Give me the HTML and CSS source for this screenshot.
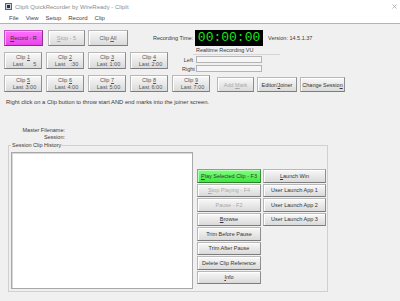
FILE: index.html
```html
<!DOCTYPE html>
<html lang="en">
<head>
    <meta charset="UTF-8">
    <meta name="viewport" content="width=device-width, initial-scale=1.0">
    <title>ClipIt QuickRecorder</title>
    <link rel="stylesheet" href="styles.css">
</head>
<body>
    <div class="titlebar">
        <svg class="app-icon" width="7" height="7" viewBox="0 0 7 7">
            <rect x="0" y="0" width="7" height="7" fill="#5a6470"/>
            <rect x="1" y="1" width="5" height="5" fill="#c9d3dd"/>
            <rect x="2" y="2" width="3" height="3" fill="#2d3640"/>
        </svg>
        <span class="title">ClipIt QuickRecorder by WireReady - ClipIt</span>
        <svg class="close" width="5" height="5" viewBox="0 0 5 5">
            <path d="M0.5 0.5 L4.5 4.5 M4.5 0.5 L0.5 4.5" stroke="#9a9a9a" stroke-width="0.7"/>
        </svg>
    </div>

    <div class="menubar">
        <span>File</span>
        <span>View</span>
        <span>Setup</span>
        <span>Record</span>
        <span>Clip</span>
    </div>

    <div class="main">
        <div class="row-top">
            <button class="btn btn-record"><u>R</u>ecord - R</button>
            <button class="btn btn-stop disabled"><u>S</u>top - 5</button>
            <button class="btn btn-all dim">Clip <u>A</u>ll</button>
            <span class="rec-label">Recording Time:</span>
            <div class="timer">00:00:00</div>
            <span class="version">Version: 14.5.1.37</span>
        </div>

        <div class="row-a">
            <div class="clips">
                <button class="btn clip"><span>Clip <u>1</u></span><span class="last">Last<b>5</b></span></button>
                <button class="btn clip"><span>Clip <u>2</u></span><span class="last">Last<b>:30</b></span></button>
                <button class="btn clip"><span>Clip <u>3</u></span><span class="last">Last<b>1:00</b></span></button>
                <button class="btn clip"><span>Clip <u>4</u></span><span class="last">Last<b>2:00</b></span></button>
            </div>
            <div class="vu">
                <div class="vu-title">Realtime Recording VU</div>
                <div class="vu-row"><span class="vu-label">Left</span><div class="vu-meter"></div></div>
                <div class="vu-row"><span class="vu-label">Right</span><div class="vu-meter"></div></div>
            </div>
        </div>

        <div class="row-b">
            <div class="clips">
                <button class="btn clip"><span>Clip <u>5</u></span><span class="last">Last<b>3:00</b></span></button>
                <button class="btn clip"><span>Clip <u>6</u></span><span class="last">Last<b>4:00</b></span></button>
                <button class="btn clip"><span>Clip <u>7</u></span><span class="last">Last<b>5:00</b></span></button>
                <button class="btn clip"><span>Clip <u>8</u></span><span class="last">Last<b>6:00</b></span></button>
                <button class="btn clip"><span>Clip <u>9</u></span><span class="last">Last<b>7:00</b></span></button>
            </div>
            <button class="btn action btn-mark disabled">Add <u>M</u>ark</button>
            <button class="btn action btn-editor">Editor/<u>J</u>oiner</button>
            <button class="btn action btn-session">Change Sessio<u>n</u></button>
        </div>

        <p class="hint">Right click on a Clip button to throw start AND end marks into the joiner screen.</p>

        <div class="info">
            <div>Master Filename:</div>
            <div>Session:</div>
        </div>

        <fieldset class="history">
            <legend>Session Clip History</legend>
            <div class="history-body">
                <div class="listbox"></div>
                <div class="history-buttons">
                    <button class="btn small btn-play"><u>P</u>lay Selected Clip - F3</button>
                    <button class="btn small disabled"><u>S</u>top Playing - F4</button>
                    <button class="btn small disabled">Pause - F2</button>
                    <button class="btn small"><u>B</u>rowse</button>
                    <button class="btn small">Trim Before Pause</button>
                    <button class="btn small">Trim After Pause</button>
                    <button class="btn small">Delete Clip Reference</button>
                    <button class="btn small"><u>I</u>nfo</button>
                    <button class="btn small"><u>L</u>aunch Win</button>
                    <button class="btn small">User Launch App 1</button>
                    <button class="btn small">User Launch App 2</button>
                    <button class="btn small">User Launch App 3</button>
                </div>
            </div>
        </fieldset>
    </div>
</body>
</html>
```

FILE: styles.css
```css
body {
    margin: 0;
    background-color: #f0f0f0;
    font-family: "Liberation Sans", Arial, sans-serif;
    font-size: 5.5px;
    color: #3a3a3a;
}

/* window chrome */

.titlebar {
    display: flex;
    align-items: center;
    height: 13px;
    padding: 0 3px 0 5px;
    background-color: #fff;
}

.app-icon {
    margin-right: 3px;
}

.title {
    flex: 1;
    font-size: 6px;
    color: #8c8c8c;
}

.menubar {
    display: flex;
    align-items: center;
    height: 10px;
    padding-left: 5.5px;
    background-color: #fff;
    border-bottom: 1px solid #b4b4b4;
    font-size: 6px;
    color: #444;
}

.menubar span {
    padding: 0 3.5px;
}

.main {
    padding: 0 4px;
}

/* buttons */

.btn {
    box-sizing: border-box;
    height: 16px;
    padding: 0;
    font: inherit;
    color: #333;
    background: linear-gradient(#f8f8f8, #dadada);
    border: 1px solid #b8b8b8;
    border-right-color: #8e8e8e;
    border-bottom-color: #7c7c7c;
    box-shadow: inset 1px 1px 0 #fff;
}

.btn u {
    text-decoration-thickness: 0.5px;
}

.btn.disabled {
    color: #a8a8a8;
}

.btn.dim {
    color: #5e5e5e;
}

.btn-record {
    width: 39px;
    background: linear-gradient(#ff70ff, #e846e8);
    border-color: #c050c0 #903090 #803080 #c050c0;
    box-shadow: inset 1px 1px 0 #ffa8ff;
}

.btn-stop {
    width: 37px;
    margin-left: 5px;
}

.btn-all {
    width: 40px;
    margin-left: 3px;
}

/* top row */

.row-top {
    display: flex;
    align-items: center;
    height: 16px;
    margin-top: 6px;
}

.rec-label {
    margin-left: 25px;
}

.timer {
    width: 68px;
    height: 16px;
    margin-left: 2px;
    background-color: #000;
    color: #1fe31f;
    font-family: "Liberation Mono", "DejaVu Sans Mono", monospace;
    font-size: 13px;
    line-height: 16px;
    text-align: center;
}

.version {
    margin-left: 5px;
}

/* clip rows */

.row-a {
    display: flex;
    align-items: flex-start;
    margin-top: 1px;
}

.row-b {
    display: flex;
    align-items: flex-end;
    margin-top: 3px;
}

.clips {
    display: flex;
    gap: 4px;
}

.row-a .clips {
    margin-top: 5px;
}

.clip {
    display: flex;
    flex-direction: column;
    align-items: center;
    justify-content: center;
    width: 38px;
    height: 17px;
    line-height: 7px;
    color: #555;
}

.clip .last {
    display: flex;
    gap: 2px;
    padding-left: 3px;
}

.clip .last b {
    width: 11px;
    font-weight: normal;
    text-align: right;
}

.vu {
    margin-left: 14px;
}

.vu-title {
    width: 84px;
    margin-left: 11px;
    padding-left: 3px;
    line-height: 7px;
    border-bottom: 1px solid #d6d6d6;
}

.vu-row {
    display: flex;
    align-items: center;
    margin-top: 1px;
}

.vu-row + .vu-row {
    margin-top: 2px;
}

.vu-label {
    width: 11px;
    text-align: right;
}

.vu-meter {
    box-sizing: border-box;
    width: 66px;
    height: 7px;
    margin-left: 3px;
    background-color: #f6f6f6;
    border: 1px solid #b4b4b4;
}

.action {
    height: 15px;
}

.btn-mark {
    width: 37px;
    margin-left: 7px;
}

.btn-editor {
    width: 40px;
    margin-left: 3px;
}

.btn-session {
    width: 45px;
    margin-left: 3px;
}

.hint {
    margin: 6px 0 0;
    padding-left: 2px;
    font-size: 5.8px;
    line-height: 8px;
}

.info {
    width: 61px;
    margin-top: 21px;
    text-align: right;
    line-height: 6.5px;
}

/* session clip history */

.history {
    box-sizing: border-box;
    width: 320px;
    min-width: 0;
    margin: 2px 0 0 4px;
    padding: 4px 1px 2px 2px;
    border: 1px solid #d0d0d0;
}

.history legend {
    padding: 0 1px;
    line-height: 6px;
}

.history-body {
    display: flex;
    gap: 4px;
}

.listbox {
    box-sizing: border-box;
    width: 182px;
    height: 137px;
    background-color: #fff;
    border: 1px solid #a8a8a8;
    box-shadow: inset 1px 1px 0 #d8d8d8;
}

.history-buttons {
    display: grid;
    grid-template-columns: 64px 63px;
    grid-template-rows: repeat(8, 13.5px);
    grid-auto-flow: column;
    column-gap: 2px;
    row-gap: 1px;
    padding-top: 17px;
}

.btn.small {
    height: 13.5px;
}

.btn-play {
    background: linear-gradient(#80ff80, #3fe83f);
    border-color: #60c060 #389038 #288028 #60c060;
    box-shadow: inset 1px 1px 0 #b8ffb8;
}
```
